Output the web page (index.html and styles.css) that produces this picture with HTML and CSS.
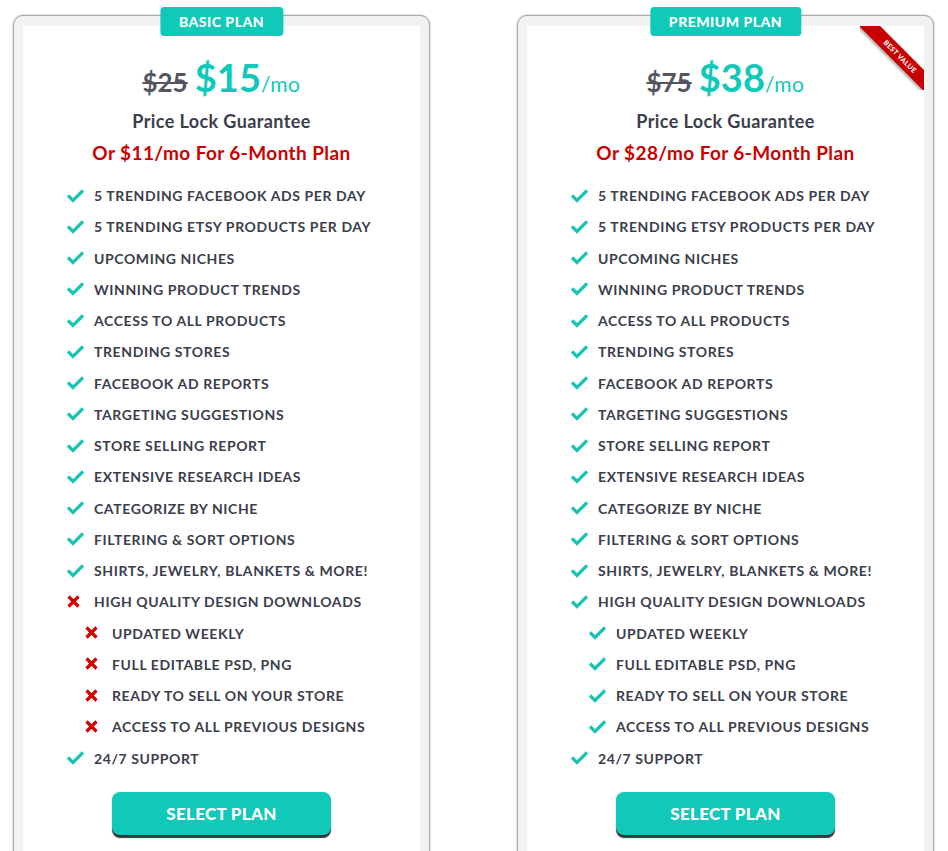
FILE: index.html
```html
<!DOCTYPE html>
<html lang="en">
<head>
    <meta charset="UTF-8">
    <title>Pricing Plans</title>
    <link rel="stylesheet" href="styles.css">
</head>
<body>
    <div class="plans">

        <div class="card">
            <div class="tab">BASIC PLAN</div>
            <div class="inner">
                <div class="price">
                    <span class="old">$25</span>
                    <span class="new">$15</span><span class="per">/mo</span>
                </div>
                <p class="lock">Price Lock Guarantee</p>
                <p class="offer">Or $11/mo For 6-Month Plan</p>

                <ul class="features">
                    <li><svg class="ico" viewBox="0 0 19 14"><path class="yes" d="M2 6.5l5 5 10-10"/></svg>5 TRENDING FACEBOOK ADS PER DAY</li>
                    <li><svg class="ico" viewBox="0 0 19 14"><path class="yes" d="M2 6.5l5 5 10-10"/></svg>5 TRENDING ETSY PRODUCTS PER DAY</li>
                    <li><svg class="ico" viewBox="0 0 19 14"><path class="yes" d="M2 6.5l5 5 10-10"/></svg>UPCOMING NICHES</li>
                    <li><svg class="ico" viewBox="0 0 19 14"><path class="yes" d="M2 6.5l5 5 10-10"/></svg>WINNING PRODUCT TRENDS</li>
                    <li><svg class="ico" viewBox="0 0 19 14"><path class="yes" d="M2 6.5l5 5 10-10"/></svg>ACCESS TO ALL PRODUCTS</li>
                    <li><svg class="ico" viewBox="0 0 19 14"><path class="yes" d="M2 6.5l5 5 10-10"/></svg>TRENDING STORES</li>
                    <li><svg class="ico" viewBox="0 0 19 14"><path class="yes" d="M2 6.5l5 5 10-10"/></svg>FACEBOOK AD REPORTS</li>
                    <li><svg class="ico" viewBox="0 0 19 14"><path class="yes" d="M2 6.5l5 5 10-10"/></svg>TARGETING SUGGESTIONS</li>
                    <li><svg class="ico" viewBox="0 0 19 14"><path class="yes" d="M2 6.5l5 5 10-10"/></svg>STORE SELLING REPORT</li>
                    <li><svg class="ico" viewBox="0 0 19 14"><path class="yes" d="M2 6.5l5 5 10-10"/></svg>EXTENSIVE RESEARCH IDEAS</li>
                    <li><svg class="ico" viewBox="0 0 19 14"><path class="yes" d="M2 6.5l5 5 10-10"/></svg>CATEGORIZE BY NICHE</li>
                    <li><svg class="ico" viewBox="0 0 19 14"><path class="yes" d="M2 6.5l5 5 10-10"/></svg>FILTERING &amp; SORT OPTIONS</li>
                    <li><svg class="ico" viewBox="0 0 19 14"><path class="yes" d="M2 6.5l5 5 10-10"/></svg>SHIRTS, JEWELRY, BLANKETS &amp; MORE!</li>
                    <li><svg class="ico" viewBox="0 0 19 14"><path class="no" d="M2.5 1.5l10 10M12.5 1.5l-10 10"/></svg>HIGH QUALITY DESIGN DOWNLOADS</li>
                    <li class="sub"><svg class="ico" viewBox="0 0 19 14"><path class="no" d="M2.5 1.5l10 10M12.5 1.5l-10 10"/></svg>UPDATED WEEKLY</li>
                    <li class="sub"><svg class="ico" viewBox="0 0 19 14"><path class="no" d="M2.5 1.5l10 10M12.5 1.5l-10 10"/></svg>FULL EDITABLE PSD, PNG</li>
                    <li class="sub"><svg class="ico" viewBox="0 0 19 14"><path class="no" d="M2.5 1.5l10 10M12.5 1.5l-10 10"/></svg>READY TO SELL ON YOUR STORE</li>
                    <li class="sub"><svg class="ico" viewBox="0 0 19 14"><path class="no" d="M2.5 1.5l10 10M12.5 1.5l-10 10"/></svg>ACCESS TO ALL PREVIOUS DESIGNS</li>
                    <li><svg class="ico" viewBox="0 0 19 14"><path class="yes" d="M2 6.5l5 5 10-10"/></svg>24/7 SUPPORT</li>
                </ul>

                <div class="action">
                    <button class="select">SELECT PLAN</button>
                </div>
            </div>
        </div>

        <div class="card">
            <div class="tab">PREMIUM PLAN</div>
            <div class="inner">
                <div class="ribbon-box"><div class="ribbon">BEST VALUE</div></div>
                <div class="price">
                    <span class="old">$75</span>
                    <span class="new">$38</span><span class="per">/mo</span>
                </div>
                <p class="lock">Price Lock Guarantee</p>
                <p class="offer">Or $28/mo For 6-Month Plan</p>

                <ul class="features">
                    <li><svg class="ico" viewBox="0 0 19 14"><path class="yes" d="M2 6.5l5 5 10-10"/></svg>5 TRENDING FACEBOOK ADS PER DAY</li>
                    <li><svg class="ico" viewBox="0 0 19 14"><path class="yes" d="M2 6.5l5 5 10-10"/></svg>5 TRENDING ETSY PRODUCTS PER DAY</li>
                    <li><svg class="ico" viewBox="0 0 19 14"><path class="yes" d="M2 6.5l5 5 10-10"/></svg>UPCOMING NICHES</li>
                    <li><svg class="ico" viewBox="0 0 19 14"><path class="yes" d="M2 6.5l5 5 10-10"/></svg>WINNING PRODUCT TRENDS</li>
                    <li><svg class="ico" viewBox="0 0 19 14"><path class="yes" d="M2 6.5l5 5 10-10"/></svg>ACCESS TO ALL PRODUCTS</li>
                    <li><svg class="ico" viewBox="0 0 19 14"><path class="yes" d="M2 6.5l5 5 10-10"/></svg>TRENDING STORES</li>
                    <li><svg class="ico" viewBox="0 0 19 14"><path class="yes" d="M2 6.5l5 5 10-10"/></svg>FACEBOOK AD REPORTS</li>
                    <li><svg class="ico" viewBox="0 0 19 14"><path class="yes" d="M2 6.5l5 5 10-10"/></svg>TARGETING SUGGESTIONS</li>
                    <li><svg class="ico" viewBox="0 0 19 14"><path class="yes" d="M2 6.5l5 5 10-10"/></svg>STORE SELLING REPORT</li>
                    <li><svg class="ico" viewBox="0 0 19 14"><path class="yes" d="M2 6.5l5 5 10-10"/></svg>EXTENSIVE RESEARCH IDEAS</li>
                    <li><svg class="ico" viewBox="0 0 19 14"><path class="yes" d="M2 6.5l5 5 10-10"/></svg>CATEGORIZE BY NICHE</li>
                    <li><svg class="ico" viewBox="0 0 19 14"><path class="yes" d="M2 6.5l5 5 10-10"/></svg>FILTERING &amp; SORT OPTIONS</li>
                    <li><svg class="ico" viewBox="0 0 19 14"><path class="yes" d="M2 6.5l5 5 10-10"/></svg>SHIRTS, JEWELRY, BLANKETS &amp; MORE!</li>
                    <li><svg class="ico" viewBox="0 0 19 14"><path class="yes" d="M2 6.5l5 5 10-10"/></svg>HIGH QUALITY DESIGN DOWNLOADS</li>
                    <li class="sub"><svg class="ico" viewBox="0 0 19 14"><path class="yes" d="M2 6.5l5 5 10-10"/></svg>UPDATED WEEKLY</li>
                    <li class="sub"><svg class="ico" viewBox="0 0 19 14"><path class="yes" d="M2 6.5l5 5 10-10"/></svg>FULL EDITABLE PSD, PNG</li>
                    <li class="sub"><svg class="ico" viewBox="0 0 19 14"><path class="yes" d="M2 6.5l5 5 10-10"/></svg>READY TO SELL ON YOUR STORE</li>
                    <li class="sub"><svg class="ico" viewBox="0 0 19 14"><path class="yes" d="M2 6.5l5 5 10-10"/></svg>ACCESS TO ALL PREVIOUS DESIGNS</li>
                    <li><svg class="ico" viewBox="0 0 19 14"><path class="yes" d="M2 6.5l5 5 10-10"/></svg>24/7 SUPPORT</li>
                </ul>

                <div class="action">
                    <button class="select">SELECT PLAN</button>
                </div>
            </div>
        </div>

    </div>
</body>
</html>
```

FILE: styles.css
```css
body {
    margin: 0;
    background-color: #fff;
    font-family: Lato, "Open Sans", sans-serif;
    color: #3b3e4b;
}

.plans {
    display: flex;
    gap: 87px;
    padding: 15px 0 0 13px;
}

.card {
    position: relative;
    width: 397px;
    height: 860px;
    padding: 10px 9px 0;
    border: 1px solid #a9a9a9;
    border-radius: 10px;
    background-color: #f2f2f2;
    box-shadow: 0 0 2px rgba(0, 0, 0, 0.35);
}

.tab {
    position: absolute;
    z-index: 2;
    top: -9px;
    left: 50%;
    transform: translateX(-50%);
    padding: 0 19px;
    height: 29px;
    line-height: 29px;
    border-radius: 4px;
    background-color: #10c9b9;
    color: #fff;
    font-size: 14px;
    font-weight: 900;
    letter-spacing: 0.5px;
    white-space: nowrap;
}

.inner {
    position: relative;
    height: 100%;
    background-color: #fff;
    padding-top: 29px;
}

.price {
    text-align: center;
    line-height: 44px;
    height: 44px;
}

.old {
    font-size: 26px;
    font-weight: 700;
    color: #555560;
    text-decoration: line-through;
    text-decoration-thickness: 2px;
    margin-right: 3px;
}

.new {
    font-size: 38px;
    font-weight: 700;
    color: #10c9b9;
}

.per {
    font-size: 21px;
    font-weight: 400;
    color: #10c9b9;
    letter-spacing: 0.5px;
}

.lock {
    margin: 11px 0 0;
    text-align: center;
    font-size: 18px;
    font-weight: 700;
    letter-spacing: 0.4px;
    color: #3b3e4b;
}

.offer {
    margin: 9px 0 0;
    text-align: center;
    font-size: 19px;
    font-weight: 700;
    letter-spacing: 0.4px;
    color: #cc0000;
}

.features {
    list-style: none;
    margin: 16px 0 0;
    padding: 0 0 0 43px;
}

.features li {
    display: flex;
    align-items: center;
    height: 31.25px;
    font-size: 14px;
    font-weight: 700;
    letter-spacing: 0.6px;
}

.features li.sub {
    padding-left: 18px;
}

.ico {
    width: 19px;
    height: 14px;
    margin-right: 9px;
    flex: none;
}

.ico path {
    fill: none;
    stroke-width: 3.2;
}

.ico .yes {
    stroke: #19c4b4;
}

.ico .no {
    stroke: #d40000;
}

.action {
    margin-top: 18px;
    text-align: center;
}

.select {
    width: 219px;
    height: 43px;
    border: none;
    border-radius: 8px;
    background-color: #10c9b9;
    color: #fff;
    font-family: Lato, sans-serif;
    font-size: 17px;
    font-weight: 900;
    letter-spacing: 0.3px;
    box-shadow: 0 3px 1px #2f3338;
    cursor: pointer;
}

.ribbon-box {
    position: absolute;
    top: 0;
    right: 0;
    width: 64px;
    height: 64px;
    overflow: hidden;
}

.ribbon {
    position: absolute;
    top: 23px;
    left: -10px;
    width: 100px;
    height: 15px;
    line-height: 15px;
    transform: rotate(45deg);
    background-color: #c80000;
    color: #fff;
    font-size: 7px;
    font-weight: 900;
    text-align: center;
    letter-spacing: 0.3px;
    box-shadow: 0 2px 3px rgba(0, 0, 0, 0.35);
}
```
